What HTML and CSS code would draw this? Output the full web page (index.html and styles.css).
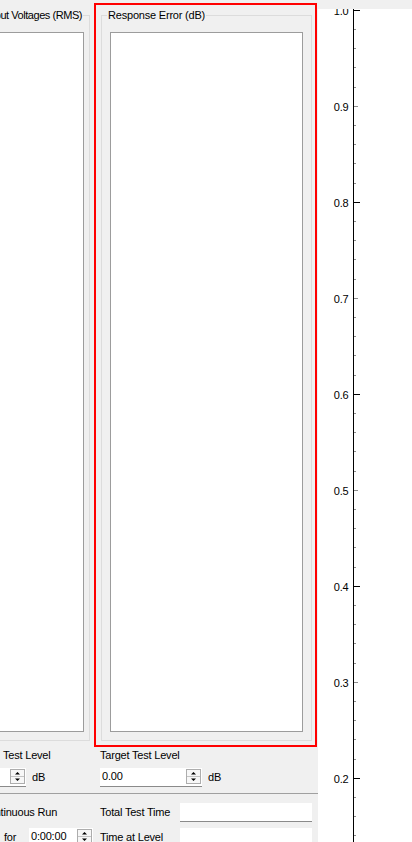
FILE: index.html
```html
<!DOCTYPE html>
<html lang="en">
<head>
<meta charset="utf-8">
<title>Response Error</title>
<link rel="stylesheet" href="styles.css">
</head>
<body>
<div class="app">
  <div class="panel">
    <div class="groups">
      <fieldset class="group group-left">
        <legend class="legend-tail"><span>Output Voltages (RMS)</span></legend>
        <div class="list"></div>
      </fieldset>
      <div class="highlight">
        <fieldset class="group group-main">
          <legend>Response Error (dB)</legend>
          <div class="list"></div>
        </fieldset>
      </div>
    </div>

    <div class="controls levels">
      <div class="col">
        <div class="label label-test">Test Level</div>
        <div class="spin-row">
          <div class="spinbox level-box">
            <span class="value"></span>
            <svg class="spin" width="15" height="15" viewBox="0 0 15 15"><rect x=".5" y=".5" width="14" height="14" fill="#f7f7f7" stroke="#adadad"/><path d="M1 7.5H14" stroke="#c4c4c4"/><path d="M5 5.5h5L7.5 3z" fill="#000"/><path d="M5 9.5h5L7.5 12z" fill="#000"/></svg>
          </div>
          <span class="unit">dB</span>
        </div>
      </div>
      <div class="col">
        <div class="label">Target Test Level</div>
        <div class="spin-row">
          <div class="spinbox level-box">
            <span class="value">0.00</span>
            <svg class="spin" width="15" height="15" viewBox="0 0 15 15"><rect x=".5" y=".5" width="14" height="14" fill="#f7f7f7" stroke="#adadad"/><path d="M1 7.5H14" stroke="#c4c4c4"/><path d="M5 5.5h5L7.5 3z" fill="#000"/><path d="M5 9.5h5L7.5 12z" fill="#000"/></svg>
          </div>
          <span class="unit">dB</span>
        </div>
      </div>
    </div>

    <div class="controls run">
      <div class="col">
        <div class="row"><span class="label label-cont">Continuous Run</span></div>
        <div class="row">
          <span class="label label-for">for</span>
          <div class="spinbox time-box">
            <span class="value">0:00:00</span>
            <svg class="spin" width="15" height="15" viewBox="0 0 15 15"><rect x=".5" y=".5" width="14" height="14" fill="#f7f7f7" stroke="#adadad"/><path d="M1 7.5H14" stroke="#c4c4c4"/><path d="M5 5.5h5L7.5 3z" fill="#000"/><path d="M5 9.5h5L7.5 12z" fill="#000"/></svg>
          </div>
        </div>
      </div>
      <div class="col">
        <div class="row"><span class="label label-right">Total Test Time</span><div class="field"></div></div>
        <div class="row"><span class="label label-right">Time at Level</span><div class="field"></div></div>
      </div>
    </div>
  </div>

  <div class="plot">
    <svg class="axis" width="94" height="833" viewBox="0 0 94 833">
      <path stroke="#8c8c8c" fill="none" d="M35 97.5H40M35 289.5H40M35 481.5H40M35 673.5H40
        M35 20.5H38M35 39.5H38M35 58.5H38M35 78.5H38
        M35 116.5H38M35 135.5H38M35 154.5H38M35 174.5H38
        M35 212.5H38M35 231.5H38M35 250.5H38M35 270.5H38
        M35 308.5H38M35 327.5H38M35 346.5H38M35 366.5H38
        M35 404.5H38M35 423.5H38M35 442.5H38M35 462.5H38
        M35 500.5H38M35 519.5H38M35 538.5H38M35 558.5H38
        M35 596.5H38M35 615.5H38M35 634.5H38M35 654.5H38
        M35 692.5H38M35 711.5H38M35 730.5H38M35 750.5H38
        M35 788.5H38M35 807.5H38M35 826.5H38"/>
      <path stroke="#000" fill="none" d="M35.5 0V833M35 1.5H42M35 193.5H42M35 385.5H42M35 577.5H42M35 769.5H42"/>
      <g class="tick-label" text-anchor="end">
        <text x="30.5" y="6">1.0</text>
        <text x="30.5" y="102">0.9</text>
        <text x="30.5" y="198">0.8</text>
        <text x="30.5" y="294">0.7</text>
        <text x="30.5" y="390">0.6</text>
        <text x="30.5" y="486">0.5</text>
        <text x="30.5" y="582">0.4</text>
        <text x="30.5" y="678">0.3</text>
        <text x="30.5" y="774">0.2</text>
      </g>
    </svg>
  </div>
</div>
</body>
</html>
```

FILE: styles.css
```css
html, body {
  margin: 0;
  height: 842px;
  overflow: hidden;
  background: #f0f0f0;
}

body {
  font-family: "Liberation Sans", Arial, sans-serif;
  font-size: 11px;
  line-height: 13px;
  letter-spacing: -0.2px;
  color: #000;
}

.app {
  display: flex;
  height: 842px;
}

.panel {
  width: 318px;
  flex: none;
  overflow: hidden;
  display: flex;
  flex-direction: column;
}

/* ---- group boxes ---- */
.groups {
  display: flex;
  align-items: flex-start;
  height: 747px;
  flex: none;
}

.group {
  margin: 0;
  min-width: 0;
  box-sizing: border-box;
  border: 1px solid #dcdcdc;
  padding: 10px 8px 8px 8px;
}

.group legend {
  padding: 0 1px;
  margin-left: -3px;
  white-space: nowrap;
  line-height: 13px;
}

.group-left {
  margin: 9px 0 0 -14px;
  width: 104px;
  flex: none;
  padding-right: 5px;
}

.group .legend-tail {
  display: flex;
  justify-content: flex-end;
  width: 89px;
  box-sizing: content-box;
  letter-spacing: -0.45px;
}

.legend-tail span {
  flex: none;
  white-space: nowrap;
}

.group-main {
  width: 211px;
}

.list {
  height: 700px;
  box-sizing: border-box;
  background: #fff;
  border: 1px solid #9c9c9c;
}

.highlight {
  flex: none;
  margin: 3px 0 0 4px;
  width: 223px;
  box-sizing: border-box;
  border: 2px solid #ff0000;
  padding: 4px 3px 4px 5px;
}

/* ---- controls ---- */
.controls {
  display: grid;
  grid-template-columns: 176px 212px;
  margin-left: -76px;
  flex: none;
}

.levels {
  padding-top: 2px;
}

.col {
  display: flex;
  flex-direction: column;
}

.label {
  white-space: nowrap;
}

.label-test {
  padding-left: 79px;
}

.spin-row {
  display: flex;
  align-items: center;
  margin-top: 6px;
  height: 19px;
}

.spinbox {
  display: flex;
  align-items: center;
  box-sizing: border-box;
  height: 19px;
  background: #fff;
  border-bottom: 1px solid #8a8a8a;
  padding: 0 1px 1px 2px;
}

.level-box {
  width: 102px;
}

.time-box {
  width: 64px;
}

.value {
  flex: 1;
  white-space: nowrap;
}

.spin {
  display: block;
  flex: none;
}

.unit {
  margin-left: 6px;
}

.run {
  margin-top: 6px;
  border-top: 1px solid #a0a0a0;
  padding-top: 9px;
}

.row {
  display: flex;
  align-items: center;
  height: 19px;
}

.row + .row {
  margin-top: 6px;
}

.label-cont {
  margin-left: 57px;
}

.label-for {
  margin-left: 80px;
  width: 25px;
}

.label-right {
  width: 80px;
  flex: none;
}

.field {
  flex: 1;
  height: 19px;
  box-sizing: border-box;
  background: #fff;
  border-bottom: 1px solid #8a8a8a;
}

/* ---- plot ---- */
.plot {
  flex: 1;
  margin-top: 9px;
  height: 833px;
  background: #fff;
  overflow: hidden;
}

.axis {
  display: block;
}

.tick-label {
  font-family: "Liberation Sans", Arial, sans-serif;
  font-size: 11px;
  fill: #000;
}
```
